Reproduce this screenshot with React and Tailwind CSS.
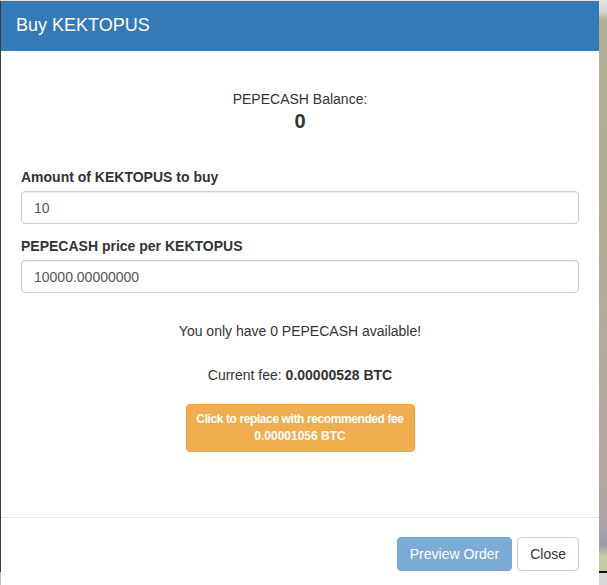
export default function App() {
  return (
    <div className="flex h-[585px] w-[607px] overflow-hidden bg-white font-['Liberation_Sans',Arial,sans-serif] text-[14px] text-[#333]">
      <div className="w-[1px] shrink-0 bg-[linear-gradient(to_bottom,#dcdcdc_0px,#dcdcdc_1px,#3c3c3c_1px,#3c3c3c_572px,#bdbdbd_572px)]" />
      <div className="flex w-[598px] shrink-0 flex-col border-t border-[#e2e6ea] bg-white">
        <div className="h-[50px] shrink-0 bg-[#337ab7] pl-[15px] pt-[11px]">
          <h4 className="text-[18px] leading-[26px] text-white">Buy KEKTOPUS</h4>
        </div>
        <div className="flex h-[466px] shrink-0 flex-col px-[20px] pt-[38px]">
          <div className="text-center leading-[20px]">PEPECASH Balance:</div>
          <div className="text-center text-[20px] font-bold leading-[24px]">0</div>
          <label className="mt-[34px] mb-[4px] block font-bold leading-[20px]">Amount of KEKTOPUS to buy</label>
          <input
            readOnly
            value="10"
            className="h-[33px] w-full rounded-[4px] border border-[#ccc] px-[12px] text-[14px] text-[#555] shadow-[inset_0_1px_1px_rgba(0,0,0,0.075)] outline-none"
          />
          <label className="mt-[12px] mb-[4px] block font-bold leading-[20px]">PEPECASH price per KEKTOPUS</label>
          <input
            readOnly
            value="10000.00000000"
            className="h-[33px] w-full rounded-[4px] border border-[#ccc] px-[12px] text-[14px] text-[#555] shadow-[inset_0_1px_1px_rgba(0,0,0,0.075)] outline-none"
          />
          <div className="mt-[28px] text-center leading-[20px]">You only have 0 PEPECASH available!</div>
          <div className="mt-[24px] text-center leading-[20px]">
            Current fee: <span className="font-bold">0.00000528 BTC</span>
          </div>
          <div className="mt-[19px] flex justify-center">
            <button className="flex h-[48px] w-[229px] flex-col items-center justify-center rounded-[4px] border border-[#eea236] bg-[#f0ad4e] py-[6px] text-[12px] font-bold leading-[17px] text-white">
              <span className="tracking-[-0.4px]">Click to replace with recommended fee</span>
              <span>0.00001056 BTC</span>
            </button>
          </div>
        </div>
        <div className="flex flex-1 justify-end gap-[5px] border-t border-[#e5e5e5] pt-[19px] pr-[20px]">
          <button className="h-[34px] rounded-[4px] border border-[#7aa6d0] bg-[#7bacd8] px-[12px] leading-[20px] text-white">
            Preview Order
          </button>
          <button className="h-[34px] rounded-[4px] border border-[#ccc] bg-white px-[12px] leading-[20px] text-[#333]">
            Close
          </button>
        </div>
      </div>
      <div className="flex-1 bg-[linear-gradient(to_bottom,#e4e4e4_0px,#d6d6cc_12px,#b0b092_20px,#aead92_200px,#b3aa9c_320px,#b6a6a2_470px,#aaa5a8_528px,#9c9ca8_545px,#c4c9a6_556px,#c4c9a6_571px,#111_571px,#111_573px,#d8d8d8_573px)]" />
    </div>
  );
}
